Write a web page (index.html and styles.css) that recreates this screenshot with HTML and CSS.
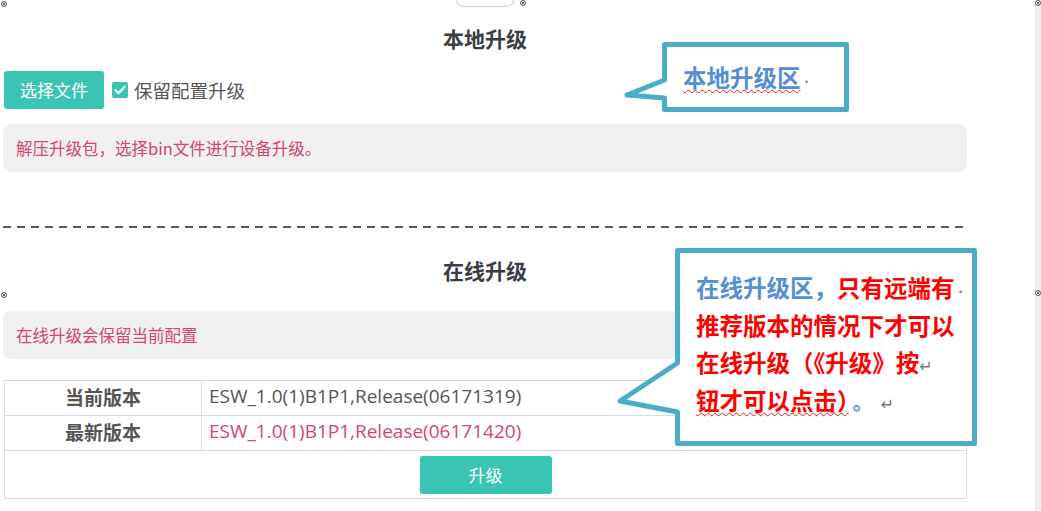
FILE: index.html
```html
<!DOCTYPE html>
<html lang="zh-CN">
<head>
<meta charset="utf-8">
<title>本地升级 / 在线升级</title>
<link rel="stylesheet" href="styles.css">
</head>
<body>
<div class="page">
  <main class="content">
    <div class="handle"></div>
    <h2 class="title">本地升级</h2>
    <div class="actions">
      <button class="btn btn-file" type="button">选择文件</button>
      <label class="check">
        <span class="box"><svg viewBox="0 0 16 16" width="16" height="16"><path d="M3.5 8.2 L6.6 11.2 L12.6 4.8" fill="none" stroke="#fff" stroke-width="2.2" stroke-linecap="round" stroke-linejoin="round"/></svg></span>
        <span>保留配置升级</span>
      </label>
    </div>
    <div class="notice">解压升级包，选择bin文件进行设备升级。</div>
    <div class="divider"></div>
    <h2 class="title title-online">在线升级</h2>
    <div class="notice">在线升级会保留当前配置</div>
    <table class="versions">
      <tr>
        <th>当前版本</th>
        <td class="val">ESW_1.0(1)B1P1,Release(06171319)</td>
      </tr>
      <tr>
        <th>最新版本</th>
        <td class="val val-new">ESW_1.0(1)B1P1,Release(06171420)</td>
      </tr>
      <tr>
        <td class="btn-cell" colspan="2"><button class="btn btn-upgrade" type="button">升级</button></td>
      </tr>
    </table>
  </main>
  <div class="gutter"></div>

  <svg class="callouts" width="1041" height="511" viewBox="0 0 1041 511">
    <path d="M664.5 44.5 H846.5 V109.5 H664.5 V98 L627 95 L664.5 80 Z" fill="#fff" stroke="#4bacc6" stroke-width="5" stroke-linejoin="round"/>
    <path d="M677.5 250.5 H974.5 V443.5 H677.5 V412 L620 401 L677.5 363 Z" fill="#fff" stroke="#4bacc6" stroke-width="5" stroke-linejoin="round"/>
  </svg>

  <div class="callout-text c1"><span class="blue wavy">本地升级区</span><span class="mark">·</span></div>
  <div class="callout-text c2">
    <div class="line"><span class="blue">在线升级区，</span><span class="red">只有远端有</span><span class="mark">·</span></div>
    <div class="line"><span class="red">推荐版本的情况下才可以</span></div>
    <div class="line"><span class="red">在线升级（《升级》按</span><span class="ret">↵</span></div>
    <div class="line"><span class="red wavy">钮才可以点击）</span><span class="dot">。</span><span class="ret ret2">↵</span></div>
  </div>

  <svg class="handle-mark m1" viewBox="0 0 6 6"><circle cx="3" cy="3" r="2.5" fill="#fff" stroke="#333" stroke-width="0.8"/><path d="M1.4 1.4 L4.6 4.6 M4.6 1.4 L1.4 4.6" stroke="#333" stroke-width="0.8"/></svg>
  <svg class="handle-mark m2" viewBox="0 0 6 6"><circle cx="3" cy="3" r="2.5" fill="#fff" stroke="#333" stroke-width="0.8"/><path d="M1.4 1.4 L4.6 4.6 M4.6 1.4 L1.4 4.6" stroke="#333" stroke-width="0.8"/></svg>
  <svg class="handle-mark m3" viewBox="0 0 6 6"><circle cx="3" cy="3" r="2.5" fill="#fff" stroke="#333" stroke-width="0.8"/><path d="M1.4 1.4 L4.6 4.6 M4.6 1.4 L1.4 4.6" stroke="#333" stroke-width="0.8"/></svg>
  <svg class="handle-mark m4" viewBox="0 0 6 6"><circle cx="3" cy="3" r="2.5" fill="#fff" stroke="#333" stroke-width="0.8"/><path d="M1.4 1.4 L4.6 4.6 M4.6 1.4 L1.4 4.6" stroke="#333" stroke-width="0.8"/></svg>
  <svg class="handle-mark m5" viewBox="0 0 6 6"><circle cx="3" cy="3" r="2.5" fill="#fff" stroke="#333" stroke-width="0.8"/><path d="M1.4 1.4 L4.6 4.6 M4.6 1.4 L1.4 4.6" stroke="#333" stroke-width="0.8"/></svg>
</div>
</body>
</html>
```

FILE: styles.css
```css
* { box-sizing: border-box; }

html, body {
  margin: 0;
  padding: 0;
  background: #fff;
}

body {
  font-family: "Noto Sans CJK SC", "Open Sans", sans-serif;
  color: #555;
}

.page {
  position: relative;
  width: 1041px;
  height: 511px;
  overflow: hidden;
  display: flex;
}

.content {
  width: 1035px;
  padding: 0 68px 0 3px;
  display: flex;
  flex-direction: column;
}

.gutter {
  width: 6px;
  background: #efefef;
}

.handle {
  width: 58px;
  height: 7px;
  margin: 0 auto;
  border: 1px solid #cfcfcf;
  border-top: none;
  border-radius: 0 0 14px 14px;
}

.title {
  margin: 16px 0 0;
  font-size: 21px;
  line-height: 30px;
  font-weight: 700;
  color: #3a3d42;
  text-align: center;
}

.title-online {
  margin-top: 27px;
}

.actions {
  margin-top: 18px;
  display: flex;
  align-items: center;
}

.btn {
  border: none;
  border-radius: 3px;
  background: #3ac4b4;
  color: #fff;
  font-family: "Noto Sans CJK SC", sans-serif;
  font-size: 17px;
  line-height: 38px;
  height: 38px;
  padding: 0;
  cursor: pointer;
}

.btn-file {
  margin-left: 1px;
  width: 100px;
}

.check {
  display: flex;
  align-items: center;
  margin-left: 8px;
  font-size: 18.5px;
  line-height: 24px;
  color: #555;
}

.check .box {
  width: 16px;
  height: 16px;
  border-radius: 2px;
  background: #3ac4b4;
  margin-right: 6px;
  display: flex;
}

.notice {
  margin-top: 15px;
  height: 48px;
  line-height: 48px;
  padding-left: 13px;
  border-radius: 8px;
  background: #f0f0f0;
  color: #d6456b;
  font-size: 16.5px;
}

.divider {
  margin-top: 54px;
  height: 2px;
  background: repeating-linear-gradient(to right, #5a5a5a 0 8px, transparent 8px 14px);
}

.title-online + .notice {
  margin-top: 26px;
}

.versions {
  margin: 21px 0 0 1px;
  width: 963px;
  border-collapse: collapse;
  font-size: 19px;
}

.versions th,
.versions td {
  border: 1px solid #d6dce4;
  padding: 0 0 3px;
  height: 35px;
  line-height: 31px;
}

.versions th {
  width: 197px;
  font-weight: 700;
  color: #555;
  text-align: center;
}

.versions .val {
  padding-left: 7px;
  font-family: "Open Sans", "Noto Sans CJK SC", sans-serif;
  color: #555;
  text-align: left;
}

.versions .val-new {
  color: #d6456b;
}

.versions .btn-cell {
  height: 48px;
  padding: 0;
  text-align: center;
  vertical-align: middle;
}

.btn-upgrade {
  width: 132px;
  display: inline-block;
  vertical-align: middle;
}

.callouts {
  position: absolute;
  left: 0;
  top: 0;
  pointer-events: none;
}

.callout-text {
  position: absolute;
  font-family: "Noto Sans CJK SC", sans-serif;
  font-weight: 700;
  font-size: 23.5px;
  white-space: nowrap;
}

.c1 {
  left: 683px;
  top: 59px;
  line-height: 36px;
}

.c2 {
  left: 696px;
  top: 268px;
  display: flex;
  flex-direction: column;
}

.c2 .line {
  height: 37.7px;
  line-height: 38px;
}

.blue { color: #558ed5; }
.red { color: #ff0000; }

.wavy {
  text-decoration: underline wavy #e02020;
  text-decoration-thickness: 1px;
  text-underline-offset: 2px;
}

.mark {
  color: #888;
  font-size: 12px;
  font-weight: 400;
  line-height: 0;
}

.ret {
  color: #777;
  font-size: 16px;
  font-weight: 400;
  line-height: 0;
  font-family: "DejaVu Sans", sans-serif;
}

.ret2 {
  margin-left: 8px;
}

.dot {
  color: #558ed5;
  font-size: 20px;
  line-height: 0;
  margin-left: 4px;
}

.handle-mark {
  position: absolute;
  width: 6px;
  height: 6px;
}

.m1 { left: 1px; top: 1px; }
.m2 { left: 520px; top: 0; }
.m3 { left: 1035px; top: 0; }
.m4 { left: 1px; top: 292px; }
.m5 { left: 1035px; top: 290px; }
```
